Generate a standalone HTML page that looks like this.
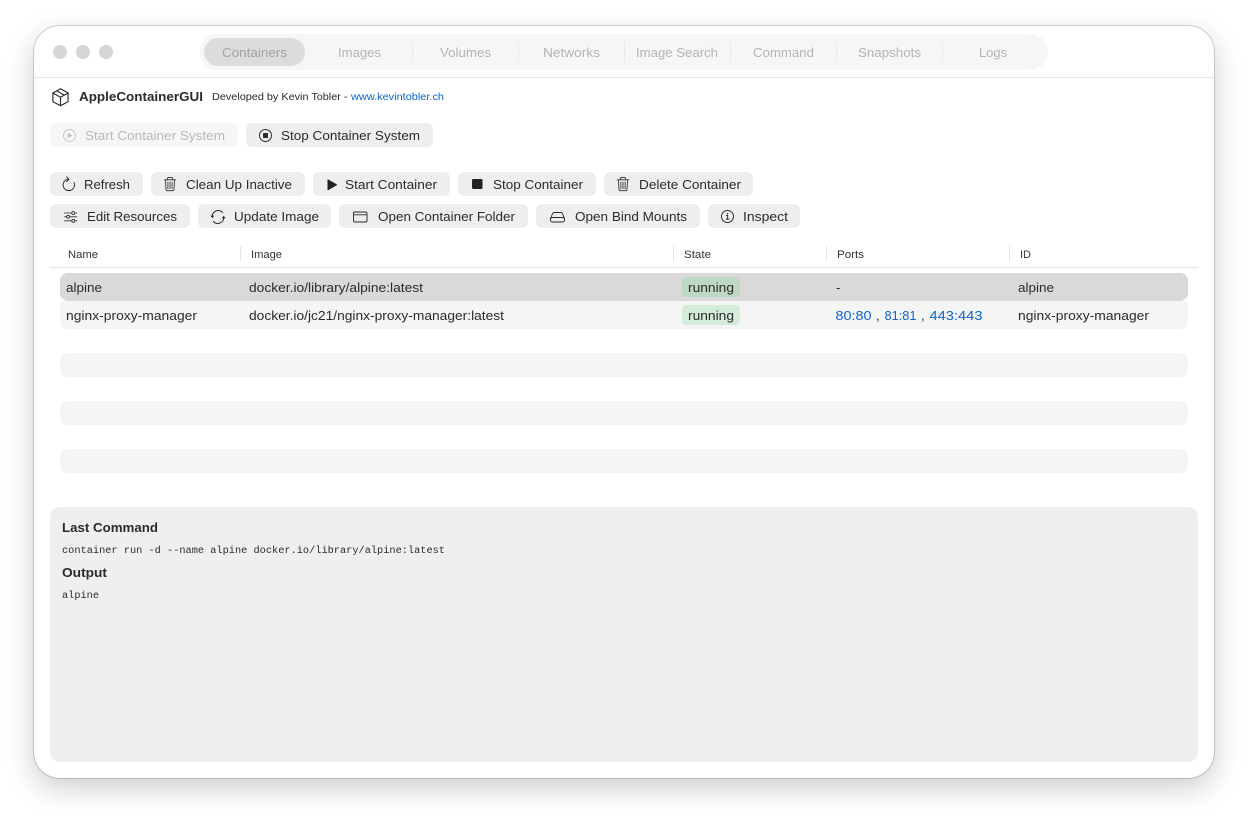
<!DOCTYPE html>
<html><head><meta charset="utf-8"><title>AppleContainerGUI</title>
<style>
html,body{margin:0;padding:0;background:#fff;width:1248px;height:820px;overflow:hidden}
#win{position:absolute;left:34px;top:26px;width:1180px;height:752px;background:#fff;border-radius:26px;box-shadow:0 0 0 1px rgba(0,0,0,.16),0 10px 30px rgba(0,0,0,.2)}
.b{position:absolute}
.btn{background:#eeeeee;border-radius:6px;height:24px}
svg{position:absolute;left:0;top:0}
text{font-family:"Liberation Sans",sans-serif;font-size:13px;fill:#2b2b2b}
.tab{fill:#b4b4b4}
.h{font-size:11px;fill:#333}
.m{font-family:"Liberation Mono",monospace;font-size:10px}
.i{fill:none;stroke:#2b2b2b;stroke-width:.95;stroke-linecap:round;stroke-linejoin:round}
</style></head><body>
<div id="win"></div>
<div class="b" style="left:34px;top:77px;width:1180px;height:1px;background:#e6e6e6"></div>
<div class="b" style="left:200px;top:34px;width:848px;height:36px;background:#f6f6f6;border-radius:18px"></div>
<div class="b" style="left:204px;top:38px;width:101px;height:28px;background:#dcdcdc;border-radius:14px"></div>
<div class="b btn" style="left:50px;top:123px;width:188px;background:#f6f6f6"></div>
<div class="b btn" style="left:246px;top:123px;width:187px"></div>
<div class="b btn" style="left:50px;top:172px;width:93px"></div>
<div class="b btn" style="left:151px;top:172px;width:154px"></div>
<div class="b btn" style="left:313px;top:172px;width:137px"></div>
<div class="b btn" style="left:458px;top:172px;width:138px"></div>
<div class="b btn" style="left:604px;top:172px;width:149px"></div>
<div class="b btn" style="left:50px;top:204px;width:140px"></div>
<div class="b btn" style="left:198px;top:204px;width:133px"></div>
<div class="b btn" style="left:339px;top:204px;width:189px"></div>
<div class="b btn" style="left:536px;top:204px;width:164px"></div>
<div class="b btn" style="left:708px;top:204px;width:92px"></div>
<div class="b" style="left:50px;top:267px;width:1148px;height:1px;background:#e4e4e4"></div>
<div class="b" style="left:60px;top:301px;width:1128px;height:28px;background:#f4f5f4;border-radius:0 0 7px 7px"></div>
<div class="b" style="left:60px;top:273px;width:1128px;height:28px;background:#d9d9d9;border-radius:8px"></div>
<div class="b" style="left:682px;top:277px;width:58px;height:20px;background:#bfd8c3;border-radius:4px"></div>
<div class="b" style="left:682px;top:305px;width:58px;height:20px;background:#d4ecd9;border-radius:4px"></div>
<div class="b" style="left:60px;top:353px;width:1128px;height:24px;background:#f4f5f4;border-radius:7px"></div>
<div class="b" style="left:60px;top:401px;width:1128px;height:24px;background:#f4f5f4;border-radius:7px"></div>
<div class="b" style="left:60px;top:449px;width:1128px;height:24px;background:#f4f5f4;border-radius:7px"></div>
<div class="b" style="left:50px;top:507px;width:1148px;height:255px;background:#efefef;border-radius:10px"></div>

<svg width="1248" height="820" viewBox="0 0 1248 820" xmlns="http://www.w3.org/2000/svg">
<circle cx="60" cy="52" r="7" fill="#d6d6d6"/><circle cx="83" cy="52" r="7" fill="#d6d6d6"/><circle cx="106" cy="52" r="7" fill="#d6d6d6"/>
<g stroke="#e9e9e9" stroke-width="1"><path d="M412.500 42v20M518.500 42v20M624.500 42v20M730.500 42v20M836.500 42v20M942.500 42v20"/></g>
<text x="222" y="57" class="tab" style="fill:#a2a2a2" textLength="65" lengthAdjust="spacingAndGlyphs">Containers</text>
<text x="338" y="57" class="tab" textLength="43" lengthAdjust="spacingAndGlyphs">Images</text>
<text x="440" y="57" class="tab" textLength="51" lengthAdjust="spacingAndGlyphs">Volumes</text>
<text x="543" y="57" class="tab" textLength="57" lengthAdjust="spacingAndGlyphs">Networks</text>
<text x="636" y="57" class="tab" textLength="82" lengthAdjust="spacingAndGlyphs">Image Search</text>
<text x="753" y="57" class="tab" textLength="61" lengthAdjust="spacingAndGlyphs">Command</text>
<text x="858" y="57" class="tab" textLength="63" lengthAdjust="spacingAndGlyphs">Snapshots</text>
<text x="979" y="57" class="tab" textLength="28" lengthAdjust="spacingAndGlyphs">Logs</text>

<g class="i" style="stroke-width:1.15"><path d="M60.500 88.800l7.600 4.200v8.600l-7.600 4.200-7.600-4.200V93z"/><path d="M52.900 93l7.600 4.300 7.600-4.300M60.500 97.300v8.500M56.700 90.900l7.600 4.200"/></g>
<text x="79" y="101" style="font-weight:700" textLength="124" lengthAdjust="spacingAndGlyphs">AppleContainerGUI</text>
<text x="212" y="100" style="font-size:10px" textLength="135.500" lengthAdjust="spacingAndGlyphs">Developed by Kevin Tobler -</text>
<text x="351" y="100" style="font-size:10px;fill:#0a64d0" textLength="93" lengthAdjust="spacingAndGlyphs">www.kevintobler.ch</text>

<circle cx="69.500" cy="135.500" r="6" fill="none" stroke="#c4c4c4" stroke-width=".9"/><path d="M67.800 132.800l4.600 2.700-4.600 2.700z" fill="#c4c4c4"/>
<text x="85" y="140" style="fill:#b9b9b9" textLength="140" lengthAdjust="spacingAndGlyphs">Start Container System</text>
<circle cx="265.500" cy="135.500" r="6" fill="none" stroke="#2b2b2b" stroke-width=".95"/><rect x="263" y="133" width="5" height="5" rx=".8" fill="#2b2b2b"/>
<text x="281" y="140" textLength="139" lengthAdjust="spacingAndGlyphs">Stop Container System</text>

<g class="i"><path d="M68.800 179.200a5.700 5.700 0 1 0 5.200 3.400"/><path d="M66.600 177l2.400 2.300-2.400 2.300"/></g>
<text x="84" y="189" textLength="46" lengthAdjust="spacingAndGlyphs">Refresh</text>
<g class="i" style="stroke-width:.85"><path d="M164.300 179.800h11.400M167.500 179.800v-1.200a1.200 1.200 0 0 1 1.200-1.200h2.600a1.200 1.200 0 0 1 1.200 1.200v1.200M165.400 179.800l.6 9.700a1.300 1.300 0 0 0 1.300 1.200h5.400a1.300 1.300 0 0 0 1.300-1.200l.6-9.700M167.900 182v6.700M170 182v6.700M172.100 182v6.700"/></g>
<text x="186" y="189" textLength="106" lengthAdjust="spacingAndGlyphs">Clean Up Inactive</text>
<path d="M327.500 179.800v9.900a.5.500 0 0 0 .8.400l8.500-4.900a.5.500 0 0 0 0-.8l-8.500-4.900a.5.500 0 0 0-.8.300z" fill="#222"/>
<text x="345" y="189" textLength="92" lengthAdjust="spacingAndGlyphs">Start Container</text>
<rect x="472" y="179" width="10.500" height="10" rx="1.200" fill="#222"/>
<text x="493" y="189" textLength="90" lengthAdjust="spacingAndGlyphs">Stop Container</text>
<g class="i" style="stroke-width:.85" transform="translate(453 0)"><path d="M164.300 179.800h11.400M167.500 179.800v-1.200a1.200 1.200 0 0 1 1.200-1.200h2.600a1.200 1.200 0 0 1 1.200 1.200v1.200M165.400 179.800l.6 9.700a1.300 1.300 0 0 0 1.300 1.200h5.400a1.300 1.300 0 0 0 1.300-1.200l.6-9.700M167.900 182v6.700M170 182v6.700M172.100 182v6.700"/></g>
<text x="639" y="189" textLength="102" lengthAdjust="spacingAndGlyphs">Delete Container</text>

<g class="i" style="stroke-width:.85"><path d="M64.500 213h7M75 213h1.800M64.500 216.800h1.800M70 216.800h6.800M64.500 220.800h7M75 220.800h1.800"/><circle cx="73.300" cy="213" r="1.500"/><circle cx="68.200" cy="216.800" r="1.500"/><circle cx="73.300" cy="220.800" r="1.500"/></g>
<text x="87" y="221" textLength="90" lengthAdjust="spacingAndGlyphs">Edit Resources</text>
<g class="i"><path d="M212.200 216a6 6 0 0 1 10.400-3.500M223.800 218a6 6 0 0 1-10.400 3.500"/></g><path d="M210.500 215.600h3.600l-1.800 2.700zM225.500 218.400h-3.600l1.800-2.700z" fill="#222"/>
<text x="234" y="221" textLength="85" lengthAdjust="spacingAndGlyphs">Update Image</text>
<g class="i"><rect x="353.500" y="212" width="13.500" height="10" rx="1.500"/><path d="M353.500 214.800h13.500"/></g>
<text x="378" y="221" textLength="137" lengthAdjust="spacingAndGlyphs">Open Container Folder</text>
<g class="i"><path d="M550.500 218.500l2.100-5a1.800 1.800 0 0 1 1.600-1h6.600a1.800 1.800 0 0 1 1.600 1l2.100 5M552.500 217.500h10a2 2 0 0 1 2 2v.5a2 2 0 0 1-2 2h-10a2 2 0 0 1-2-2v-.5a2 2 0 0 1 2-2z"/></g>
<text x="575" y="221" textLength="112" lengthAdjust="spacingAndGlyphs">Open Bind Mounts</text>
<g class="i"><circle cx="727.500" cy="216.500" r="6"/><path d="M726.400 215.500h1.200v3.500M726.100 219.100h2.900"/></g><circle cx="727.400" cy="213.700" r=".7" fill="#222"/>
<text x="743" y="221" textLength="45" lengthAdjust="spacingAndGlyphs">Inspect</text>

<g stroke="#e6e6e6" stroke-width="1"><path d="M240.500 246v16M673.500 246v16M826.500 246v16M1009.500 246v16"/></g>
<text x="68" y="258" class="h" textLength="30" lengthAdjust="spacingAndGlyphs">Name</text>
<text x="251" y="258" class="h" textLength="31" lengthAdjust="spacingAndGlyphs">Image</text>
<text x="684" y="258" class="h" textLength="27" lengthAdjust="spacingAndGlyphs">State</text>
<text x="837" y="258" class="h" textLength="27" lengthAdjust="spacingAndGlyphs">Ports</text>
<text x="1020" y="258" class="h" textLength="11" lengthAdjust="spacingAndGlyphs">ID</text>

<text x="66" y="292" textLength="36" lengthAdjust="spacingAndGlyphs">alpine</text>
<text x="249" y="292" textLength="174" lengthAdjust="spacingAndGlyphs">docker.io/library/alpine:latest</text>
<text x="688" y="292" textLength="46" lengthAdjust="spacingAndGlyphs">running</text>
<text x="836" y="292">-</text>
<text x="1018" y="292" textLength="36" lengthAdjust="spacingAndGlyphs">alpine</text>

<text x="66" y="320" textLength="131" lengthAdjust="spacingAndGlyphs">nginx-proxy-manager</text>
<text x="249" y="320" textLength="255" lengthAdjust="spacingAndGlyphs">docker.io/jc21/nginx-proxy-manager:latest</text>
<text x="688" y="320" textLength="46" lengthAdjust="spacingAndGlyphs">running</text>
<text x="835.500" y="320" style="fill:#0a64d0" textLength="36" lengthAdjust="spacingAndGlyphs">80:80</text>
<text x="876" y="320">,</text>
<text x="884.500" y="320" style="fill:#0a64d0" textLength="32" lengthAdjust="spacingAndGlyphs">81:81</text>
<text x="921" y="320">,</text>
<text x="929.500" y="320" style="fill:#0a64d0" textLength="53" lengthAdjust="spacingAndGlyphs">443:443</text>
<text x="1018" y="320" textLength="131" lengthAdjust="spacingAndGlyphs">nginx-proxy-manager</text>

<text x="62" y="532" style="font-weight:700" textLength="96" lengthAdjust="spacingAndGlyphs">Last Command</text>
<text x="62" y="553" class="m" textLength="383" lengthAdjust="spacingAndGlyphs">container run -d --name alpine docker.io/library/alpine:latest</text>
<text x="62" y="577" style="font-weight:700" textLength="45" lengthAdjust="spacingAndGlyphs">Output</text>
<text x="62" y="598" class="m" textLength="37" lengthAdjust="spacingAndGlyphs">alpine</text>
</svg>
</body></html>
